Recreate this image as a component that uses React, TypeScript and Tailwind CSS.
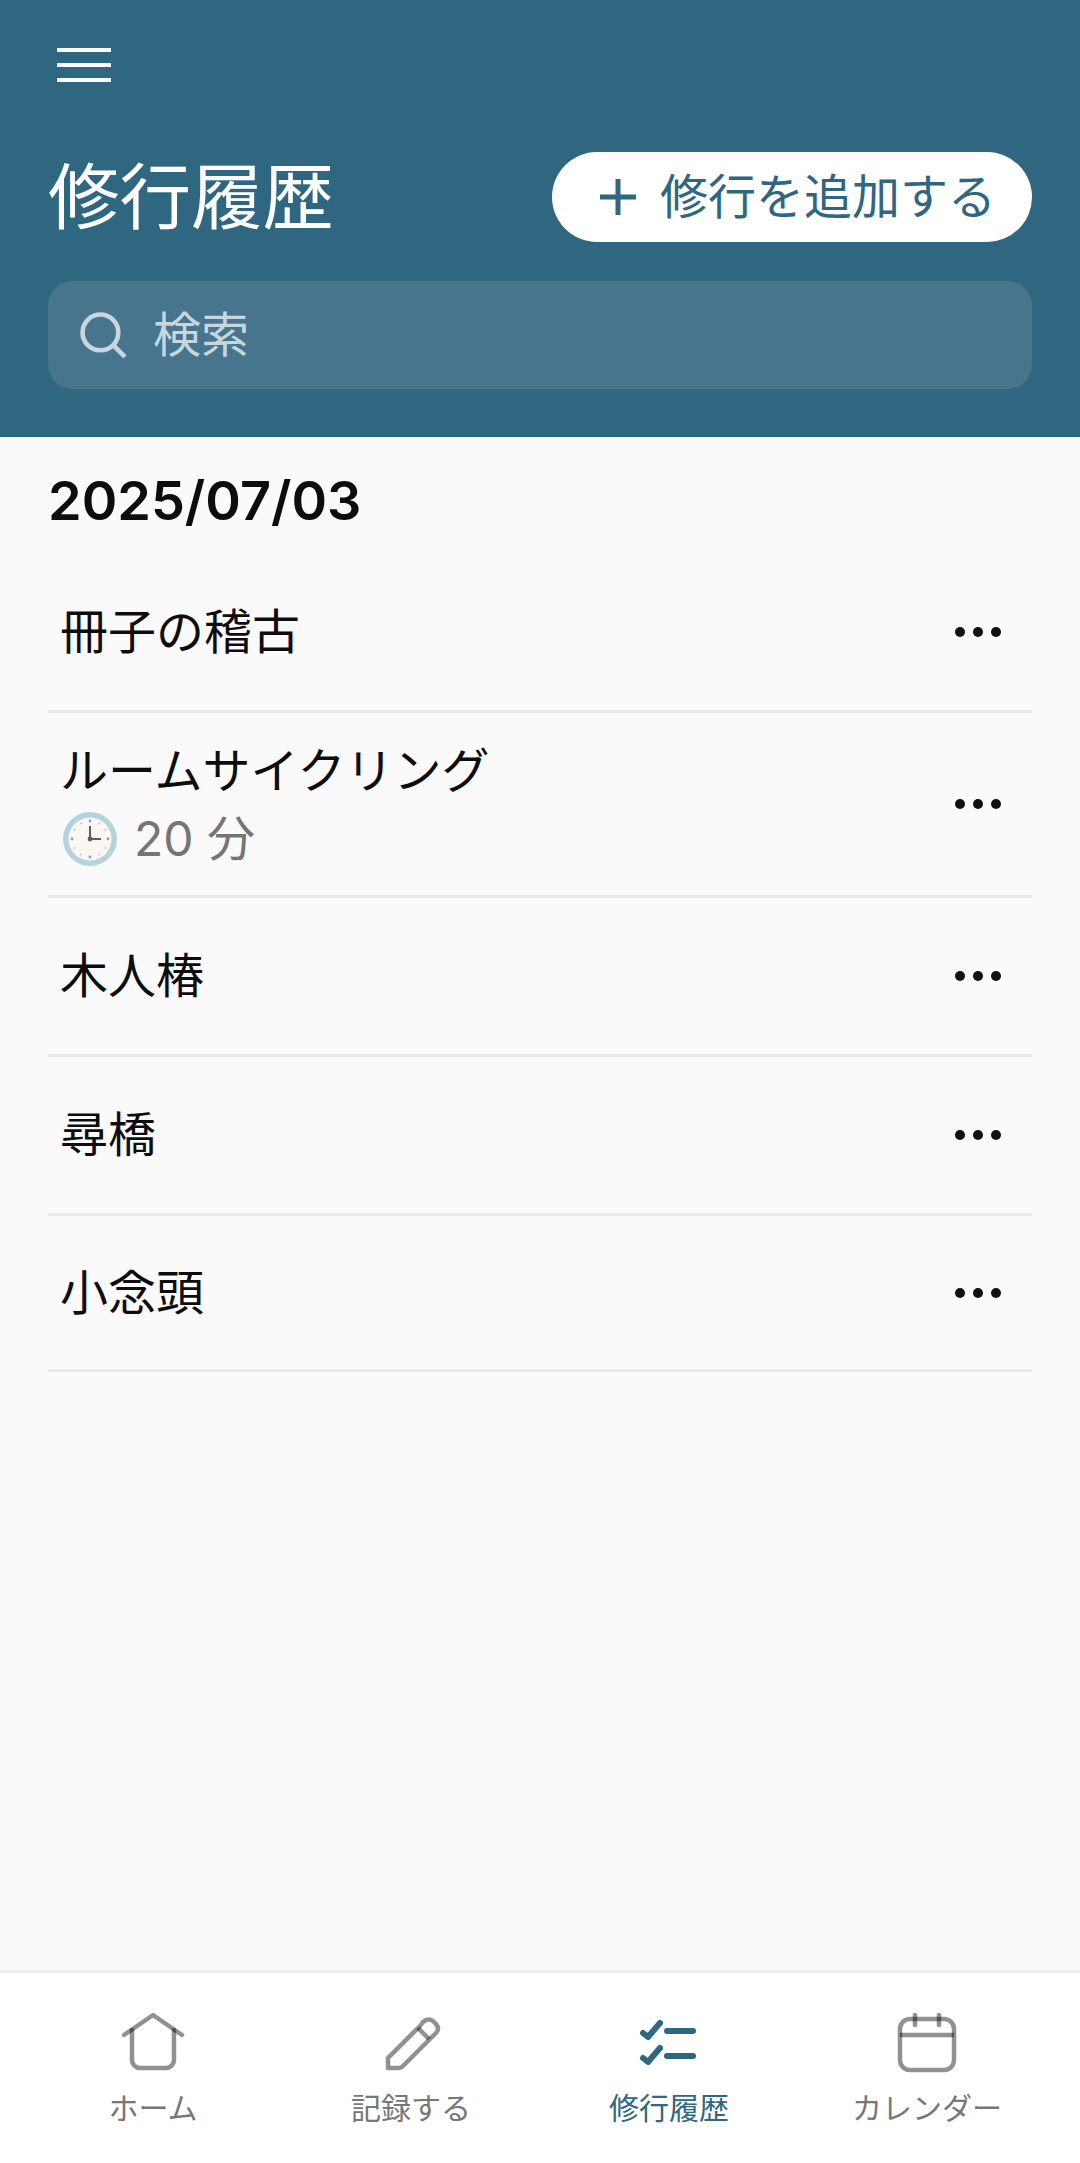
const font = { fontFamily: '"Inter", "Noto Sans CJK JP", sans-serif' };

function ClockEmoji() {
  return (
    <svg viewBox="0 0 56 56" className="w-[56px] h-[56px] shrink-0 ml-[2px]">
      <circle cx="28" cy="28" r="27" fill="#b5d3de" />
      <circle cx="28" cy="28" r="21.5" fill="#fbf8f3" />
      <g fill="#7fa6b8">
        <circle cx="28" cy="10" r="1.4" />
        <circle cx="28" cy="46" r="1.4" />
        <circle cx="10" cy="28" r="1.4" />
        <circle cx="46" cy="28" r="1.4" />
      </g>
      <g fill="#c9c4bc">
        <circle cx="37" cy="12.5" r="1" />
        <circle cx="43.5" cy="19" r="1" />
        <circle cx="43.5" cy="37" r="1" />
        <circle cx="37" cy="43.5" r="1" />
        <circle cx="19" cy="43.5" r="1" />
        <circle cx="12.5" cy="37" r="1" />
        <circle cx="12.5" cy="19" r="1" />
        <circle cx="19" cy="12.5" r="1" />
      </g>
      <path d="M28 15v13h11" fill="none" stroke="#6d5a55" strokeWidth="2" />
      <circle cx="28" cy="28" r="2.4" fill="#6d5a55" />
    </svg>
  );
}

function Dots() {
  return (
    <div className="flex gap-[8px]">
      <span className="w-[10px] h-[10px] rounded-full bg-[#111]" />
      <span className="w-[10px] h-[10px] rounded-full bg-[#111]" />
      <span className="w-[10px] h-[10px] rounded-full bg-[#111]" />
    </div>
  );
}

function Row({ title, height, minutes }: { title: string; height: string; minutes?: number }) {
  return (
    <div className={`flex items-center justify-between border-b-[3px] border-[#e8e8e8] pl-[12px] pr-[31px] ${height}`}>
      <div className={minutes !== undefined ? 'pt-[2px]' : ''}>
        <div className="text-[48px] leading-[62px] text-[#0d0d0d]">{title}</div>
        {minutes !== undefined && (
          <div className="flex items-center gap-[16px] mt-[6px] text-[48px] leading-[62px] text-[#757575]">
            <ClockEmoji />
            <span>{minutes} 分</span>
          </div>
        )}
      </div>
      <Dots />
    </div>
  );
}

function NavItem({ label, active, icon }: { label: string; active?: boolean; icon: React.ReactNode }) {
  return (
    <div className={`flex-1 flex flex-col items-center ${active ? 'text-[#2f6680]' : 'text-[#777]'}`}>
      <div className="h-[64px] flex items-center justify-center">{icon}</div>
      <div className="text-[30px] leading-[40px] mt-[12px]">{label}</div>
    </div>
  );
}

export default function App() {
  return (
    <div style={font} className="w-[1080px] h-[2163px] flex flex-col bg-[#fafafa] overflow-hidden">
      <header className="h-[437px] shrink-0 bg-[#2f6680] px-[48px] pt-[48px]">
        <div className="flex flex-col gap-[11px] ml-[9px]">
          <span className="w-[54px] h-[4px] bg-white" />
          <span className="w-[54px] h-[4px] bg-white" />
          <span className="w-[54px] h-[4px] bg-white" />
        </div>
        <div className="flex items-center justify-between mt-[70px]">
          <h1 className="text-[71.5px] leading-[90px] text-white">修行履歴</h1>
          <button className="w-[480px] h-[90px] rounded-full bg-white flex items-center pl-[48px] gap-[24px] text-[48px] text-[#2f6680]">
            <svg viewBox="0 0 36 36" className="w-[36px] h-[36px]" fill="none" stroke="#2f6680" strokeWidth="5">
              <path d="M18 0v36M0 18h36" />
            </svg>
            修行を追加する
          </button>
        </div>
        <div className="mt-[39px] h-[108px] rounded-[24px] bg-[#46758d] flex items-center pl-[32px] gap-[26px]">
          <svg viewBox="0 0 46 46" className="w-[47px] h-[47px]" fill="none" stroke="#c8d6df" strokeWidth="4.5">
            <circle cx="20" cy="20" r="17.5" />
            <path d="M32 32l12 12" />
          </svg>
          <span className="text-[48px] text-[#c8d6df]">検索</span>
        </div>
      </header>

      <main className="flex-1 px-[48px]">
        <h2 className="text-[54px] leading-[64px] font-semibold text-[#0d0d0d] mt-[32px] mb-[20px]">2025/07/03</h2>
        <Row title="冊子の稽古" height="h-[160px]" />
        <Row title="ルームサイクリング" height="h-[185px]" minutes={20} />
        <Row title="木人椿" height="h-[159px]" />
        <Row title="尋橋" height="h-[159px]" />
        <Row title="小念頭" height="h-[156px]" />
      </main>

      <nav className="h-[193px] shrink-0 bg-white border-t-[3px] border-[#efefef] flex px-[24px] pt-[39px]">
        <NavItem
          label="ホーム"
          icon={
            <svg viewBox="0 0 64 64" className="w-[64px] h-[64px]" fill="none" stroke="#000" strokeOpacity="0.43" strokeWidth="4.5" strokeLinejoin="round" strokeLinecap="round">
              <path d="M3 23 32 3l29 20" />
              <path d="M11 18v30a8 8 0 0 0 8 8h26a8 8 0 0 0 8-8V18" />
            </svg>
          }
        />
        <NavItem
          label="記録する"
          icon={
            <svg viewBox="0 0 64 64" className="w-[64px] h-[64px]" fill="none" stroke="#000" strokeOpacity="0.43" strokeWidth="4.5" strokeLinejoin="round">
              <path d="M9 46 41 14l3-4q5-4.500 10-1l3 3q4 5 0 9L24 54q-2 2-4 2H9z" />
              <path d="M39 16 50 27" />
            </svg>
          }
        />
        <NavItem
          label="修行履歴"
          active
          icon={
            <svg viewBox="0 0 64 64" className="w-[64px] h-[64px]" fill="none" stroke="#2f6680" strokeWidth="6" strokeLinecap="round" strokeLinejoin="round">
              <path d="M6 21l5 4 12-14" />
              <path d="M6 46l5 4 12-14" />
              <path d="M30 19h26M30 44h26" />
            </svg>
          }
        />
        <NavItem
          label="カレンダー"
          icon={
            <svg viewBox="0 0 64 64" className="w-[64px] h-[64px]" fill="none" stroke="#000" strokeOpacity="0.43" strokeWidth="4.5" strokeLinecap="round">
              <rect x="5" y="7" width="54" height="51" rx="10" />
              <path d="M20 3v10M44 3v10" />
              <path d="M5 23h54" strokeLinecap="butt" />
            </svg>
          }
        />
      </nav>
    </div>
  );
}
